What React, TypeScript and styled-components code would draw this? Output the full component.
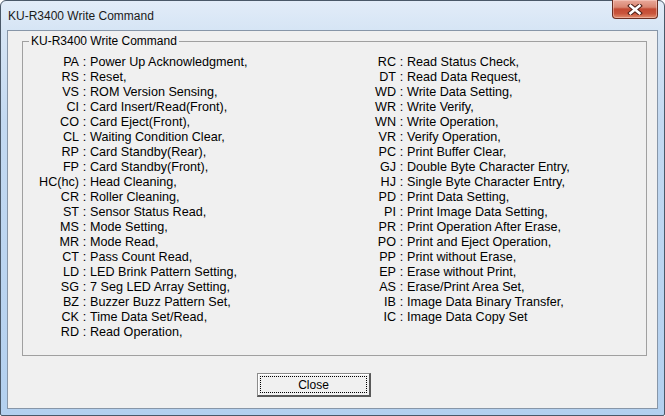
import React from "react";
import styled, { createGlobalStyle } from "styled-components";

const GlobalStyle = createGlobalStyle`
  html, body {
    margin: 0;
    padding: 0;
    background: #ffffff;
  }
  body {
    font-family: "Liberation Sans", Arial, sans-serif;
    color: #000;
  }
`;

const leftCommands: [string, string][] = [
  ["PA", "Power Up Acknowledgment,"],
  ["RS", "Reset,"],
  ["VS", "ROM Version Sensing,"],
  ["CI", "Card Insert/Read(Front),"],
  ["CO", "Card Eject(Front),"],
  ["CL", "Waiting Condition Clear,"],
  ["RP", "Card Standby(Rear),"],
  ["FP", "Card Standby(Front),"],
  ["HC(hc)", "Head Cleaning,"],
  ["CR", "Roller Cleaning,"],
  ["ST", "Sensor Status Read,"],
  ["MS", "Mode Setting,"],
  ["MR", "Mode Read,"],
  ["CT", "Pass Count Read,"],
  ["LD", "LED Brink Pattern Setting,"],
  ["SG", "7 Seg LED Array Setting,"],
  ["BZ", "Buzzer Buzz Pattern Set,"],
  ["CK", "Time Data Set/Read,"],
  ["RD", "Read Operation,"],
];

const rightCommands: [string, string][] = [
  ["RC", "Read Status Check,"],
  ["DT", "Read Data Request,"],
  ["WD", "Write Data Setting,"],
  ["WR", "Write Verify,"],
  ["WN", "Write Operation,"],
  ["VR", "Verify Operation,"],
  ["PC", "Print Buffer Clear,"],
  ["GJ", "Double Byte Character Entry,"],
  ["HJ", "Single Byte Character Entry,"],
  ["PD", "Print Data Setting,"],
  ["PI", "Print Image Data Setting,"],
  ["PR", "Print Operation After Erase,"],
  ["PO", "Print and Eject Operation,"],
  ["PP", "Print without Erase,"],
  ["EP", "Erase without Print,"],
  ["AS", "Erase/Print Area Set,"],
  ["IB", "Image Data Binary Transfer,"],
  ["IC", "Image Data Copy Set"],
];

const CommandList = ({ items }: { items: [string, string][] }) => (
  <ListS>
    {items.map(([code, text]) => (
      <React.Fragment key={code}>
        <Code>{code}</Code>
        <Sep>:</Sep>
        <Desc>{text}</Desc>
      </React.Fragment>
    ))}
  </ListS>
);

const CloseGlyph = () => (
  <svg width="16" height="11" viewBox="0 0 16 11">
    <path
      d="M3.5 1.8 L12.5 9.2 M12.5 1.8 L3.5 9.2"
      stroke="#4a1d15"
      strokeWidth="4.6"
      strokeLinecap="square"
      fill="none"
    />
    <path
      d="M3.5 1.8 L12.5 9.2 M12.5 1.8 L3.5 9.2"
      stroke="#ffffff"
      strokeWidth="2.6"
      strokeLinecap="square"
      fill="none"
    />
  </svg>
);

const App = () => {
  return (
    <>
      <GlobalStyle />
      <Window>
        <TitleBar>
          <Title>KU-R3400 Write Command</Title>
          <CloseBox>
            <CloseGlyph />
          </CloseBox>
        </TitleBar>
        <Client>
          <GroupBox>
            <Legend>KU-R3400 Write Command</Legend>
            <Columns>
              <CommandList items={leftCommands} />
              <CommandList items={rightCommands} />
            </Columns>
          </GroupBox>
          <Footer>
            <Button>
              <FocusRect>Close</FocusRect>
            </Button>
          </Footer>
        </Client>
      </Window>
    </>
  );
};

export default App;

const Window = styled.div`
  box-sizing: border-box;
  width: 665px;
  height: 416px;
  display: flex;
  flex-direction: column;
  padding: 0 6px 6px;
  border: 1px solid #4a5868;
  border-radius: 6px 6px 2px 2px;
  background: linear-gradient(
    180deg,
    #e2ecf8 0px,
    #d6e5f5 29px,
    #c3d9f1 120px,
    #b3d0ef 100%
  );
`;

const TitleBar = styled.div`
  height: 29px;
  display: flex;
  justify-content: space-between;
  align-items: flex-start;
`;

const Title = styled.div`
  padding: 8px 0 0 1px;
  font-size: 12px;
  line-height: 14px;
  color: #1a1a1a;
`;

const CloseBox = styled.div`
  box-sizing: border-box;
  width: 46px;
  height: 19px;
  margin-top: -1px;
  display: flex;
  align-items: center;
  justify-content: center;
  border: 1px solid #6a2e22;
  border-top: none;
  border-radius: 0 0 4px 4px;
  background: linear-gradient(
    180deg,
    #e9a99a 0%,
    #d98672 40%,
    #c34a33 50%,
    #c9553c 75%,
    #e08d6e 100%
  );
  box-shadow: inset 0 0 0 1px rgba(255, 220, 210, 0.45);
`;

const Client = styled.div`
  flex: 1;
  display: flex;
  flex-direction: column;
  border: 1px solid #8796a8;
  background: #f0f0f0;
`;

const GroupBox = styled.fieldset`
  margin: 4px 10px 0 14px;
  padding: 7px 0 15px 0;
  border: 1px solid #a0a0a0;
  border-radius: 0;
  min-width: 0;
`;

const Legend = styled.legend`
  margin-left: 6px;
  padding: 0 2px;
  font-size: 12px;
  line-height: 13px;
`;

const Columns = styled.div`
  display: grid;
  grid-template-columns: 317px 1fr;
`;

const ListS = styled.div`
  display: grid;
  grid-template-columns: 56px 11px auto;
  grid-auto-rows: 15px;
  font-size: 12.6px;
  line-height: 15px;
  white-space: nowrap;
`;

const Code = styled.span`
  text-align: right;
`;

const Sep = styled.span`
  text-align: center;
`;

const Desc = styled.span`
  text-align: left;
`;

const Footer = styled.div`
  padding: 17px 0 0 249px;
`;

const Button = styled.button`
  box-sizing: border-box;
  width: 114px;
  height: 24px;
  padding: 2px;
  display: flex;
  background: #f0f0f0;
  border-style: solid;
  border-width: 1px 2px 2px 1px;
  border-color: #8c8c8c #595959 #595959 #8c8c8c;
  box-shadow: inset 1px 1px 0 #ffffff;
  font-family: "Liberation Sans", Arial, sans-serif;
  font-size: 12px;
  color: #000;
`;

const FocusRect = styled.span`
  flex: 1;
  display: flex;
  align-items: center;
  justify-content: center;
  border: 1px dotted #000;
  line-height: 14px;
`;
